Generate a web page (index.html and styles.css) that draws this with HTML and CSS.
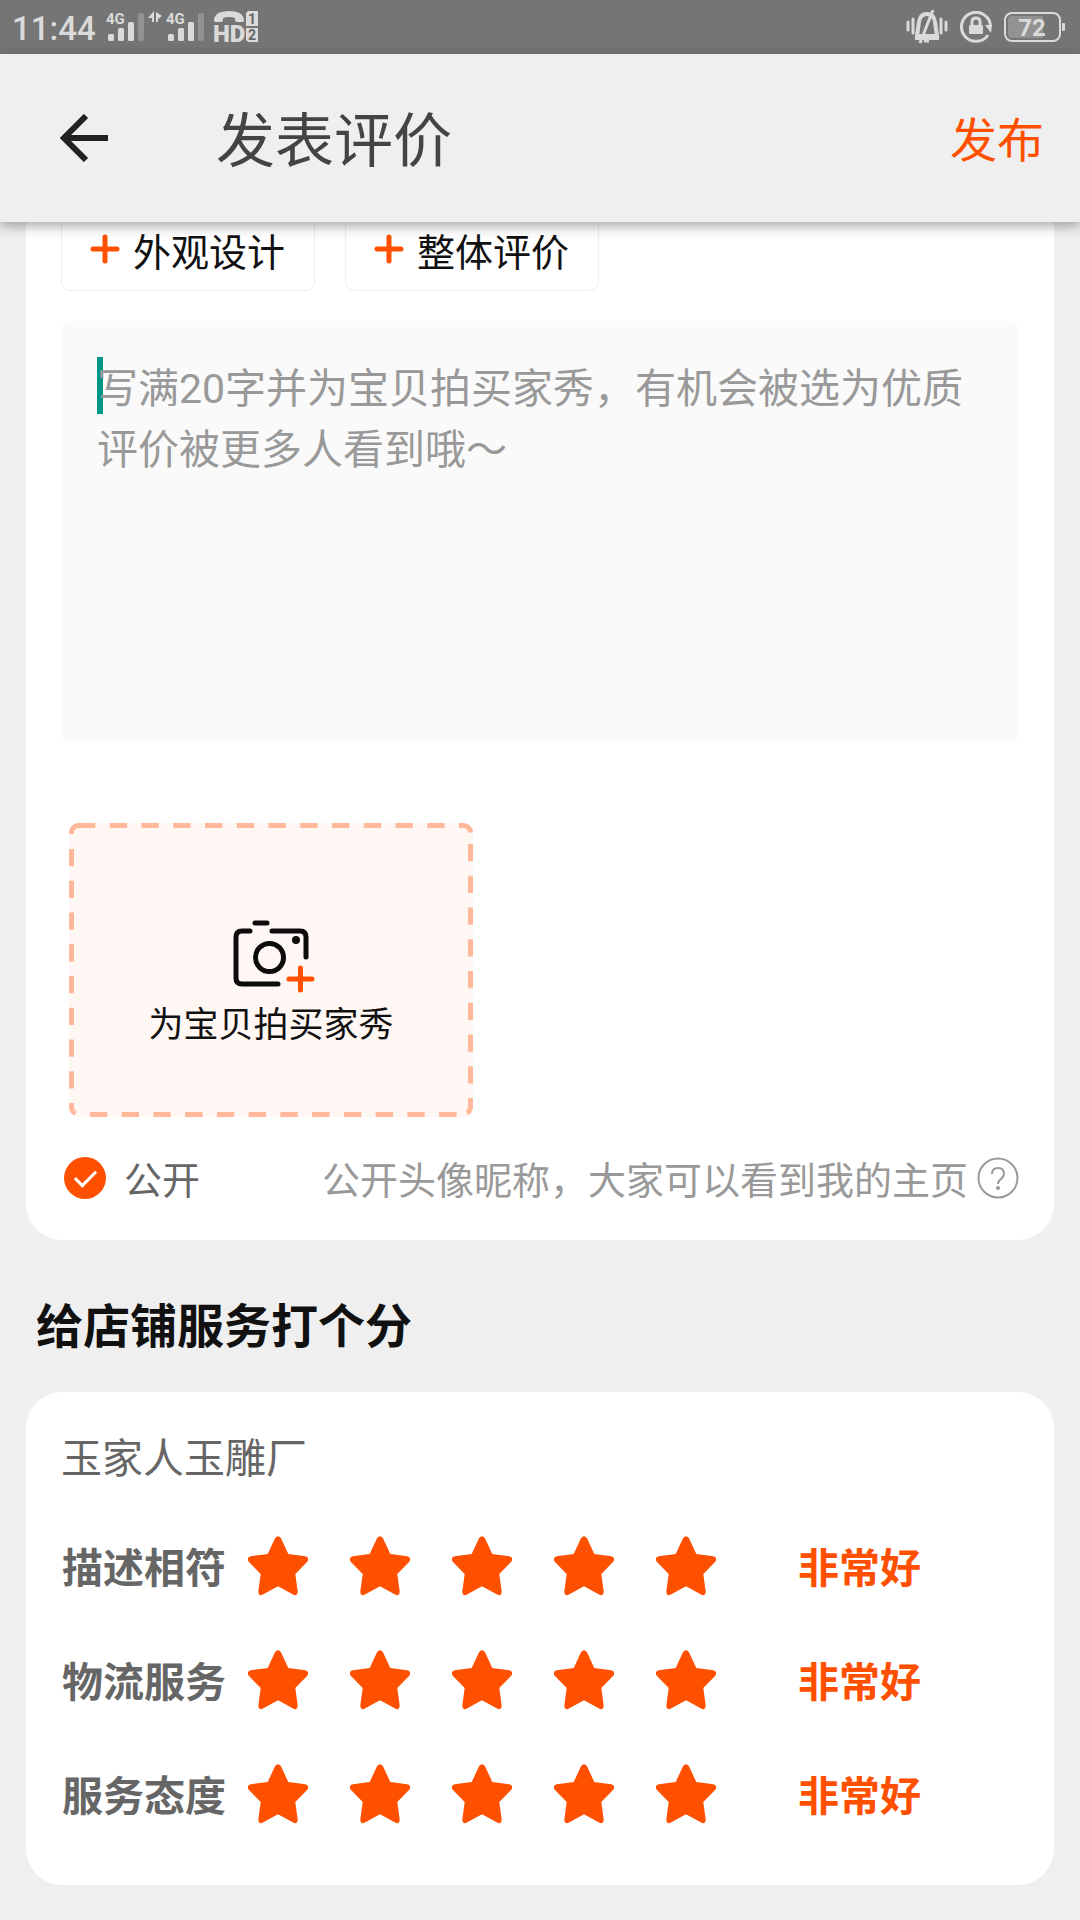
FILE: index.html
```html
<!DOCTYPE html>
<html lang="zh-CN">
<head>
<meta charset="utf-8">
<meta name="viewport" content="width=device-width, initial-scale=1">
<title>发表评价</title>
<link rel="stylesheet" href="styles.css">
</head>
<body>
<svg class="defs" aria-hidden="true">
  <symbol id="plus" viewBox="0 0 30 30"><path d="M3 15H27M15 3V27" fill="none" stroke="#ff5000" stroke-width="5" stroke-linecap="round"/></symbol>
  <symbol id="star" viewBox="0 0 60 60"><path d="M27 2.2Q30-1.8 33 2.2L40.3 18L57.2 20.3Q60.8 21.2 60 24.3Q59.8 25.2 59 26L47.3 38L49.7 55.5Q49.6 59.8 46 59L30 50.3L14 59Q10.4 59.8 10.3 55.5L12.7 38L1 26Q.2 25.2 0 24.3Q-.8 21.2 2.8 20.3L19.7 18Z" fill="#ff5000"/></symbol>
  <symbol id="bars" viewBox="0 0 38 30"><path d="M2 23.5q0-1.5 1.5-1.5h3Q8 22 8 23.5v4Q8 29 6.500 29h-3Q2 29 2 27.500ZM12 17.500q0-1.500 1.500-1.500h3q1.500 0 1.500 1.500v10q0 1.500-1.500 1.500h-3Q12 29 12 27.500ZM22 11.500q0-1.500 1.500-1.500h3q1.500 0 1.500 1.500v16q0 1.500-1.500 1.500h-3Q22 29 22 27.500Z" fill="#dadada"/><rect x="32" y="1" width="6" height="28" rx="2" fill="#929292"/></symbol>
</svg>

<div class="status">
  <div class="status-group">
    <time class="clock">11:44</time>
    <svg class="bars" viewBox="0 0 38 30"><use href="#bars"/><text x="0" y="12" class="net">4G</text></svg>
    <svg class="arrows" viewBox="0 0 14 12"><path d="M6 0V11H4V7H0ZM8 1L14 5L10 8V11H8Z" fill="#dadada"/></svg>
    <svg class="bars" viewBox="0 0 38 30"><use href="#bars"/><text x="0" y="12" class="net">4G</text></svg>
    <svg class="hd" viewBox="0 0 44 32">
      <path d="M0 10Q0 0 15 0T30 10L29 11H23Q21 11 21 9V7Q15 5 9 7V9Q9 11 7 11H1Z" fill="#dadada"/>
      <text x="-1" y="31" class="hd-text">HD</text>
      <path d="M34 0H44V15H32V2ZM32 17H44V31H34L32 29Z" fill="#dadada"/>
      <text x="38" y="13" class="sim">1</text><text x="38" y="29" class="sim">2</text>
    </svg>
  </div>
  <div class="status-group status-right">
    <svg class="bell" viewBox="0 0 42 34"><g fill="none" stroke="#dadada"><path d="M11 26L13 12Q14 4 21 4T29 12L31 26ZM9 28H33" stroke-width="4"/><path d="M27 0L14 33M18 31H23" stroke-width="3"/><path d="M2 12V20M7 9V23M35 9V23M40 12V20" stroke-width="3" stroke-linecap="round"/></g></svg>
    <svg class="lock" viewBox="0 0 32 32"><path d="M28 24A14.500 14.500 0 1 1 30.500 16" fill="none" stroke="#dadada" stroke-width="3"/><path d="M25 14H32L31 22Z" fill="#dadada"/><rect x="9" y="14" width="14" height="9" rx="1" fill="#dadada"/><path d="M12 15V11Q12 7 16 7T20 11V15" fill="none" stroke="#dadada" stroke-width="3"/></svg>
    <svg class="battery" viewBox="0 0 61 30"><rect x="1" y="1" width="55" height="28" rx="7" fill="none" stroke="#dadada" stroke-width="2"/><path d="M8 4H39V26H8Q4 26 4 22V8Q4 4 8 4Z" fill="#929292"/><rect x="58" y="11" width="3" height="8" rx="1" fill="#dadada"/><text x="28" y="24" class="level">72</text></svg>
  </div>
</div>

<header class="header">
  <button class="back" type="button" aria-label="返回"><svg viewBox="0 0 48 48"><path d="M26 2L4 24L26 46M4 24H48" fill="none" stroke="#222" stroke-width="6"/></svg></button>
  <h1 class="title">发表评价</h1>
  <button class="publish" type="submit" form="review">发布</button>
</header>

<form class="page" id="review">
  <section class="card review">
    <div class="tags">
      <button class="tag" type="button"><svg class="plus"><use href="#plus"/></svg>外观设计</button>
      <button class="tag" type="button"><svg class="plus"><use href="#plus"/></svg>整体评价</button>
    </div>
    <div class="editor">
      <span class="caret"></span>
      <textarea class="input" aria-label="评价内容" placeholder="写满20字并为宝贝拍买家秀，有机会被选为优质评价被更多人看到哦～"></textarea>
    </div>
    <button class="upload" type="button">
      <svg class="outline" viewBox="0 0 404 294"><g fill="none" stroke="#ffb899" stroke-width="5"><path d="M9 2.500H394.500A7 7 0 0 1 401.500 9.500M401.500 21V284.500A7 7 0 0 1 398 290M387.500 291.500H20M2.500 265.500V26" stroke-dasharray="17.350 14.400"/><path d="M6.500 290.500A7 7 0 0 1 2.500 284.500V280M2.500 11V9.500A7 7 0 0 1 9.500 2.500"/></g></svg>
      <svg class="camera" viewBox="0 0 82 74"><g fill="none" stroke="#0c0c0c" stroke-width="5" stroke-linecap="round"><path d="M17 11H9Q3 11 3 17V58Q3 64 9 64H45M39 11H67Q73 11 73 17V37M22 3H34"/><circle cx="36.500" cy="37.500" r="14"/></g><circle cx="63" cy="20" r="4" fill="#0c0c0c"/><path d="M56 59H79M67.500 48V70" fill="none" stroke="#ff5000" stroke-width="5" stroke-linecap="round"/></svg>
      <span>为宝贝拍买家秀</span>
    </button>
    <div class="visibility">
      <input class="check" id="public" type="checkbox" checked>
      <label class="public" for="public">公开</label>
      <span class="hint">公开头像昵称，大家可以看到我的主页</span>
      <button class="help" type="button" aria-label="说明"><svg viewBox="0 0 42 42"><circle cx="21" cy="21" r="19.500" fill="none" stroke="#999" stroke-width="2"/><path d="M15 17Q15 11 21 11T27 17Q27 19 24 22Q21 24 21 27" fill="none" stroke="#999" stroke-width="2"/><circle cx="21" cy="31" r="2" fill="#999"/></svg></button>
    </div>
  </section>

  <h2 class="heading">给店铺服务打个分</h2>

  <section class="card scores">
    <h3 class="shop">玉家人玉雕厂</h3>
    <div class="score" role="radiogroup" aria-labelledby="s1">
      <span class="label" id="s1">描述相符</span>
      <div class="stars">
        <label class="star"><input type="radio" name="match" aria-label="1星"><svg><use href="#star"/></svg></label>
        <label class="star"><input type="radio" name="match" aria-label="2星"><svg><use href="#star"/></svg></label>
        <label class="star"><input type="radio" name="match" aria-label="3星"><svg><use href="#star"/></svg></label>
        <label class="star"><input type="radio" name="match" aria-label="4星"><svg><use href="#star"/></svg></label>
        <label class="star"><input type="radio" name="match" aria-label="5星" checked><svg><use href="#star"/></svg></label>
      </div>
      <output class="grade">非常好</output>
    </div>
    <div class="score" role="radiogroup" aria-labelledby="s2">
      <span class="label" id="s2">物流服务</span>
      <div class="stars">
        <label class="star"><input type="radio" name="delivery" aria-label="1星"><svg><use href="#star"/></svg></label>
        <label class="star"><input type="radio" name="delivery" aria-label="2星"><svg><use href="#star"/></svg></label>
        <label class="star"><input type="radio" name="delivery" aria-label="3星"><svg><use href="#star"/></svg></label>
        <label class="star"><input type="radio" name="delivery" aria-label="4星"><svg><use href="#star"/></svg></label>
        <label class="star"><input type="radio" name="delivery" aria-label="5星" checked><svg><use href="#star"/></svg></label>
      </div>
      <output class="grade">非常好</output>
    </div>
    <div class="score" role="radiogroup" aria-labelledby="s3">
      <span class="label" id="s3">服务态度</span>
      <div class="stars">
        <label class="star"><input type="radio" name="attitude" aria-label="1星"><svg><use href="#star"/></svg></label>
        <label class="star"><input type="radio" name="attitude" aria-label="2星"><svg><use href="#star"/></svg></label>
        <label class="star"><input type="radio" name="attitude" aria-label="3星"><svg><use href="#star"/></svg></label>
        <label class="star"><input type="radio" name="attitude" aria-label="4星"><svg><use href="#star"/></svg></label>
        <label class="star"><input type="radio" name="attitude" aria-label="5星" checked><svg><use href="#star"/></svg></label>
      </div>
      <output class="grade">非常好</output>
    </div>
  </section>
</form>
</body>
</html>
```
FILE: styles.css
```css
* { box-sizing: border-box; }
body {
  margin: 0;
  background: #efefef;
  color: #111;
  font-family: Roboto, "Noto Sans CJK SC", sans-serif;
}
button {
  margin: 0;
  padding: 0;
  border: 0;
  background: none;
  color: inherit;
  font: inherit;
}
h1, h2, h3 { margin: 0; font-weight: 400; }
svg { display: block; flex: none; }
.defs { position: absolute; width: 0; height: 0; }

/* Status bar */
.status {
  display: flex;
  justify-content: space-between;
  height: 54px;
  padding: 0 15px 0 12px;
  background: #757575;
  color: #dadada;
}
.status-group { display: flex; align-items: center; }
.status-right { gap: 12px; }
.clock { width: 94px; padding-top: 4px; font-size: 33px; font-weight: 500; line-height: 50px; }
.bars { width: 38px; height: 30px; overflow: visible; }
.arrows { width: 14px; height: 12px; margin: 0 4px 20px; }
.hd { width: 44px; height: 32px; margin-left: 10px; overflow: visible; }
.bell { width: 42px; height: 34px; }
.lock { width: 32px; height: 32px; }
.battery { width: 61px; height: 30px; }
.net { font-size: 15px; font-weight: 700; fill: #dadada; }
.hd-text { font-size: 24px; font-weight: 900; fill: #dadada; }
.sim { font-size: 14px; font-weight: 700; fill: #666; text-anchor: middle; }
.level { font-size: 24px; font-weight: 700; fill: #dadada; text-anchor: middle; }

/* Title bar */
.header {
  position: relative;
  z-index: 1;
  display: flex;
  align-items: center;
  height: 168px;
  padding: 0 36px 0 60px;
  background: #efefef;
  box-shadow: 0 4px 12px rgba(0, 0, 0, .35);
}
.back svg { width: 48px; height: 48px; }
.title {
  flex: 1;
  margin-left: 108px;
  padding-top: 8px;
  color: #444;
  font-size: 59px;
  line-height: 84px;
}
.publish { padding-bottom: 4px; color: #ff5000; font-size: 47px; }

/* Review card */
.page { margin: -10px 26px 34px; }
.card {
  padding: 0 35px 41px;
  border-radius: 36px;
  background: #fff;
}
.review { border-radius: 0 0 36px 36px; }
.tags { display: flex; gap: 30px; }
.tag {
  display: flex;
  align-items: center;
  gap: 13px;
  height: 79px;
  padding: 0 29px 5px 28px;
  border: 1px solid #eee;
  border-radius: 9px;
  font-size: 38px;
}
.plus { width: 30px; height: 30px; }
.editor {
  position: relative;
  margin-top: 30px;
  border-radius: 9px;
  background: #fafafa;
}
.caret {
  position: absolute;
  top: 36px;
  left: 36px;
  width: 6px;
  height: 57px;
  background: #009688;
}
.input {
  position: relative;
  display: block;
  width: 100%;
  height: 420px;
  padding: 38px 36px 36px;
  border: 0;
  background: transparent;
  color: #111;
  font: inherit;
  font-size: 41px;
  line-height: 61px;
  resize: none;
  outline: 0;
}
.input::placeholder { color: #999; }
.upload {
  position: relative;
  display: flex;
  flex-direction: column;
  align-items: center;
  justify-content: center;
  gap: 2px;
  width: 404px;
  height: 294px;
  margin: 82px 0 0 8px;
  padding-top: 26px;
  border-radius: 9px;
  background: #fff7f4;
  font-size: 35px;
}
.outline { position: absolute; inset: 0; width: 100%; height: 100%; }
.camera { width: 82px; height: 74px; margin-left: 6px; }
.visibility {
  display: flex;
  align-items: center;
  margin-top: 40px;
  padding-left: 3px;
  font-size: 38px;
  line-height: 36px;
}
.check {
  appearance: none;
  display: grid;
  place-items: center;
  width: 42px;
  height: 42px;
  margin: 0;
  border-radius: 50%;
  background: #ff5000;
}
.check:checked::before {
  content: "";
  width: 18px;
  height: 9px;
  margin-bottom: 4px;
  border: solid #fff;
  border-width: 0 0 3px 3px;
  rotate: -45deg;
}
.public { margin-left: 18px; padding-top: 6px; color: #666; }
.hint { margin-left: auto; padding-top: 6px; color: #999; }
.help { margin-left: 9px; }
.help svg { width: 42px; height: 42px; }

/* Shop score card */
.heading {
  padding: 59px 10px 37px;
  font-size: 47px;
  font-weight: 700;
  line-height: 56px;
}
.scores { padding: 37px 35px 35px; }
.shop { color: #666; font-size: 41px; line-height: 60px; }
.score {
  display: flex;
  align-items: center;
  height: 114px;
  font-size: 41px;
  font-weight: 700;
}
.shop + .score { margin-top: 19px; }
.label { width: 186px; margin-left: 1px; color: #666; }
.stars { display: flex; gap: 42px; padding-top: 2px; }
.star { position: relative; }
.star svg { width: 60px; height: 60px; }
.star input {
  position: absolute;
  inset: 0;
  width: 100%;
  height: 100%;
  margin: 0;
  opacity: 0;
}
.grade { margin-left: 82px; color: #ff5000; }
```
